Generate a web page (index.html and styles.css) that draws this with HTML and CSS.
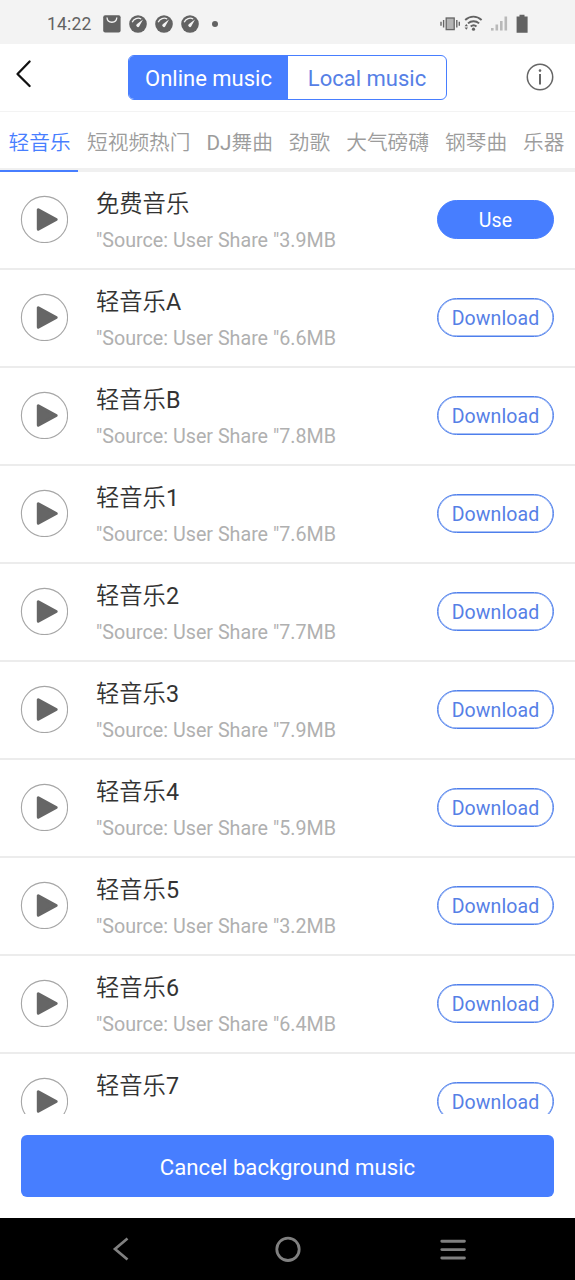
FILE: index.html
```html
<!DOCTYPE html>
<html lang="zh-CN">
<head>
<meta charset="utf-8">
<title>Background music</title>
<link rel="stylesheet" href="styles.css">
</head>
<body>
<svg class="defs" width="0" height="0" aria-hidden="true">
  <symbol id="play" viewBox="0 0 48 48">
    <circle cx="24.500" cy="24.500" r="23.100" fill="#fff" stroke="#a6a6a6" stroke-width="1.100"/>
    <path d="M18.300 14.700v19.600L36.200 24.500z" fill="#666" stroke="#666" stroke-width="3" stroke-linejoin="round"/>
  </symbol>
  <symbol id="gauge" viewBox="0 0 18 18">
    <circle cx="9" cy="9" r="8.800" fill="#626262"/>
    <path d="M3.200 7.200C4.700 3.500 9 2.300 12.200 4" fill="none" stroke="#f3f3f3" stroke-width="1.300"/>
    <path d="M14 4.600 8 9.100a1.600 1.600 0 1 0 2.300 2.100z" fill="#f3f3f3"/>
  </symbol>
</svg>
<div class="screen">
  <div class="status">
    <span class="time">14:22</span>
    <svg class="bag" viewBox="0 0 18 18"><rect x=".2" y=".2" width="17.400" height="17.400" rx="2" fill="#626262"/><path d="M4 2.500c.3 6.300 9.500 6.300 9.800 0" fill="none" stroke="#f3f3f3" stroke-width="1.300"/></svg>
    <svg class="gauge"><use href="#gauge"/></svg>
    <svg class="gauge"><use href="#gauge"/></svg>
    <svg class="gauge"><use href="#gauge"/></svg>
    <span class="dot"></span>
    <svg class="signals" viewBox="0 0 92 20">
      <rect x="6.200" y="4" width="8" height="11.600" fill="#b4b4b4" stroke="#666" stroke-width="1.300"/>
      <path d="M3.600 6v7.500M1 7.800v4M16.800 6v7.500M19.300 7.800v4" stroke="#666" stroke-width="1.400"/>
      <g fill="none" stroke="#626262" stroke-width="1.900"><path d="M25.200 6c4.800-4.500 11.600-4.500 16.400 0M28 9.400c3.200-2.900 7.900-2.900 11.100 0M30.700 12.500c1.800-1.500 4.100-1.500 5.800 0"/></g>
      <circle cx="33.500" cy="15.200" r="1.600" fill="#626262"/>
      <path d="M24.600 12.300l1.700-2.300 1.700 2.300zM24.600 13.500l1.700 2.300 1.700-2.300z" fill="#626262"/>
      <g fill="#b9b9b9"><rect x="51" y="14" width="2.600" height="2.600"/><rect x="55.500" y="10.500" width="2.600" height="6"/><rect x="60" y="7" width="2.600" height="9.500"/><rect x="64.500" y="2.500" width="2.600" height="14"/></g>
      <path d="M79.500 .7h5v1.800h3.100v16.200H76.600V2.500h2.900z" fill="#626262"/>
    </svg>
  </div>
  <header class="header">
    <svg class="back" viewBox="0 0 20 30"><path d="M14.600 2.500 2.500 15l12.100 12" fill="none" stroke="#111" stroke-width="2.300" stroke-linecap="round" stroke-linejoin="round"/></svg>
    <div class="switch"><span class="on">Online music</span><span class="off">Local music</span></div>
    <svg class="info" viewBox="0 0 28 28"><circle cx="14" cy="14" r="12.700" fill="none" stroke="#666" stroke-width="1.500"/><circle cx="14" cy="7.600" r="1.300" fill="#666"/><path d="M14 11v10.500" stroke="#666" stroke-width="2"/></svg>
  </header>
  <nav class="tabs">
    <span class="tab active">轻音乐</span><span class="tab">短视频热门</span><span class="tab"><span class="latin">DJ</span>舞曲</span><span class="tab">劲歌</span><span class="tab">大气磅礴</span><span class="tab">钢琴曲</span><span class="tab">乐器</span>
  </nav>
  <main class="list">
    <div class="row"><svg class="play"><use href="#play"/></svg><div class="track"><div class="name">免费音乐</div><div class="meta">"Source: User Share "3.9MB</div></div><span class="pill use">Use</span></div>
    <div class="row"><svg class="play"><use href="#play"/></svg><div class="track"><div class="name">轻音乐<span class="latin">A</span></div><div class="meta">"Source: User Share "6.6MB</div></div><span class="pill">Download</span></div>
    <div class="row"><svg class="play"><use href="#play"/></svg><div class="track"><div class="name">轻音乐<span class="latin">B</span></div><div class="meta">"Source: User Share "7.8MB</div></div><span class="pill">Download</span></div>
    <div class="row"><svg class="play"><use href="#play"/></svg><div class="track"><div class="name">轻音乐<span class="latin">1</span></div><div class="meta">"Source: User Share "7.6MB</div></div><span class="pill">Download</span></div>
    <div class="row"><svg class="play"><use href="#play"/></svg><div class="track"><div class="name">轻音乐<span class="latin">2</span></div><div class="meta">"Source: User Share "7.7MB</div></div><span class="pill">Download</span></div>
    <div class="row"><svg class="play"><use href="#play"/></svg><div class="track"><div class="name">轻音乐<span class="latin">3</span></div><div class="meta">"Source: User Share "7.9MB</div></div><span class="pill">Download</span></div>
    <div class="row"><svg class="play"><use href="#play"/></svg><div class="track"><div class="name">轻音乐<span class="latin">4</span></div><div class="meta">"Source: User Share "5.9MB</div></div><span class="pill">Download</span></div>
    <div class="row"><svg class="play"><use href="#play"/></svg><div class="track"><div class="name">轻音乐<span class="latin">5</span></div><div class="meta">"Source: User Share "3.2MB</div></div><span class="pill">Download</span></div>
    <div class="row"><svg class="play"><use href="#play"/></svg><div class="track"><div class="name">轻音乐<span class="latin">6</span></div><div class="meta">"Source: User Share "6.4MB</div></div><span class="pill">Download</span></div>
    <div class="row"><svg class="play"><use href="#play"/></svg><div class="track"><div class="name">轻音乐<span class="latin">7</span></div><div class="meta">"Source: User Share "7.6MB</div></div><span class="pill">Download</span></div>
  </main>
  <footer class="footer"><div class="cancel">Cancel background music</div></footer>
  <div class="sysnav">
    <svg viewBox="0 0 30 30"><path d="M20.500 4.500 8 15l12.500 10.500" fill="none" stroke="#808080" stroke-width="2.700"/></svg>
    <svg viewBox="0 0 30 30"><circle cx="15" cy="15.300" r="11.200" fill="none" stroke="#808080" stroke-width="2.800"/></svg>
    <svg viewBox="0 0 30 30"><path d="M3.800 7.200h22.600M3.800 15.600h22.600M3.800 24h22.600" fill="none" stroke="#808080" stroke-width="2.900" stroke-linecap="round"/></svg>
  </div>
</div>
</body>
</html>
```
FILE: styles.css
```css
* { box-sizing: border-box; }
body { margin: 0; background: #fff; font-family: Roboto, "Noto Sans CJK SC", sans-serif; }
svg { display: block; flex: none; }
.defs { display: none; }
.screen { width: 575px; height: 1280px; display: flex; flex-direction: column; overflow: hidden; }
.latin { font-weight: 400; }
.status { height: 44px; flex: none; background: #f3f3f3; display: flex; align-items: center; padding: 3px 43px 0 47px; color: #626262; }
.time { font-size: 17.5px; width: 56px; letter-spacing: 0.2px; }
.bag, .gauge { width: 18px; height: 18px; margin-right: 8px; }
.dot { width: 6px; height: 6px; border-radius: 50%; background: #626262; margin-left: 5px; }
.signals { width: 92px; height: 20px; margin-left: auto; }
.header { height: 68px; flex: none; border-bottom: 1px solid #f3f3f3; display: grid; grid-template-columns: 128px 319px 128px; align-items: center; }
.back { width: 20px; height: 30px; margin: -8px 0 0 15px; }
.switch { height: 45px; display: grid; grid-template-columns: 159px 1fr; border: 1.5px solid #477eff; border-radius: 6px; overflow: hidden; font-size: 22px; line-height: 45px; text-align: center; }
.on { background: #477eff; color: #fff; }
.off { color: #5680e6; }
.info { width: 28px; height: 28px; margin: -1px 0 0 79px; }
.tabs { height: 60px; flex: none; display: flex; border-bottom: 4px solid #f0f0f0; font-size: 20.7px; font-weight: 350; color: #9c9c9c; line-height: 62px; white-space: nowrap; }
.tab { height: 60px; padding: 0 8px; flex: none; }
.tab.active { width: 78px; padding-left: 8.5px; padding-right: 0; color: #477eff; border-bottom: 2px solid #477eff; margin-right: 1px; }
.list { height: 942px; flex: none; overflow: hidden; }
.row { height: 98px; display: flex; align-items: center; padding: 0 21px 1px 20px; border-bottom: 2px solid #ececec; }
.play { width: 48px; height: 48px; margin: 0 28px 1px 0; }
.track { flex: 1; padding-top: 6px; }
.name { font-size: 23.3px; line-height: 36px; color: #333; font-weight: 350; white-space: nowrap; }
.meta { font-size: 19.7px; line-height: 37px; color: #b0b0b0; white-space: nowrap; }
.pill { width: 117px; height: 39px; border: 1px solid #4e7fec; box-shadow: inset 0 0 0 0.5px #4e7fec; border-radius: 20px; color: #5680e6; font-size: 19.5px; line-height: 40px; text-align: center; letter-spacing: 0.1px; }
.pill.use { background: #477eff; border-color: #477eff; color: #fff; box-shadow: none; }
.footer { height: 104px; flex: none; padding: 21px 21px 0; }
.cancel { height: 62px; border-radius: 6px; background: #477eff; color: #fff; font-size: 22.2px; line-height: 65px; text-align: center; }
.sysnav { height: 62px; flex: none; background: #000; display: flex; justify-content: space-between; align-items: center; padding: 0 107px; }
.sysnav svg { width: 30px; height: 30px; }
```
